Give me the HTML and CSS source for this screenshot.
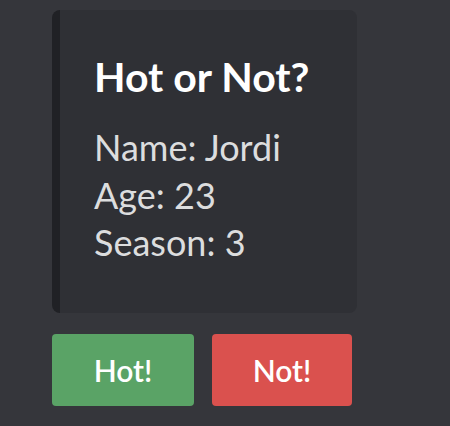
FILE: index.html
```html
<!DOCTYPE html>
<html>
<head>
<meta charset="utf-8">
<link rel="stylesheet" href="styles.css">
</head>
<body>
<div class="wrap">
  <div class="embed">
    <div class="title">Hot or Not?</div>
    <div class="desc">
      <div>Name: Jordi</div>
      <div>Age: 23</div>
      <div>Season: 3</div>
    </div>
  </div>
  <div class="buttons">
    <button class="btn hot">Hot!</button>
    <button class="btn not">Not!</button>
  </div>
</div>
</body>
</html>
```
FILE: styles.css
```css
html, body {
  margin: 0;
  padding: 0;
  background: #35363b;
  height: 100%;
}
.wrap {
  padding: 10px 0 0 52px;
  font-family: Lato, "Open Sans", sans-serif;
}
.embed {
  width: 305px;
  height: 303px;
  box-sizing: border-box;
  background: #2f3035;
  border-left: 8px solid #202125;
  border-radius: 8px;
  padding: 43px 16px 0 34px;
}
.title {
  color: #ffffff;
  font-weight: 700;
  font-size: 41px;
  line-height: 48px;
}
.desc {
  margin-top: 23px;
  color: #dcddde;
  font-size: 36px;
  line-height: 47.5px;
}
.buttons {
  display: flex;
  gap: 18px;
  margin-top: 21px;
}
.btn {
  border: none;
  border-radius: 4px;
  height: 72px;
  color: #ffffff;
  font-family: Lato, "Open Sans", sans-serif;
  font-size: 30px;
  font-weight: 600;
  padding: 0;
}
.hot {
  width: 142px;
  background: #5aa366;
}
.not {
  width: 140px;
  background: #da514e;
}
```
